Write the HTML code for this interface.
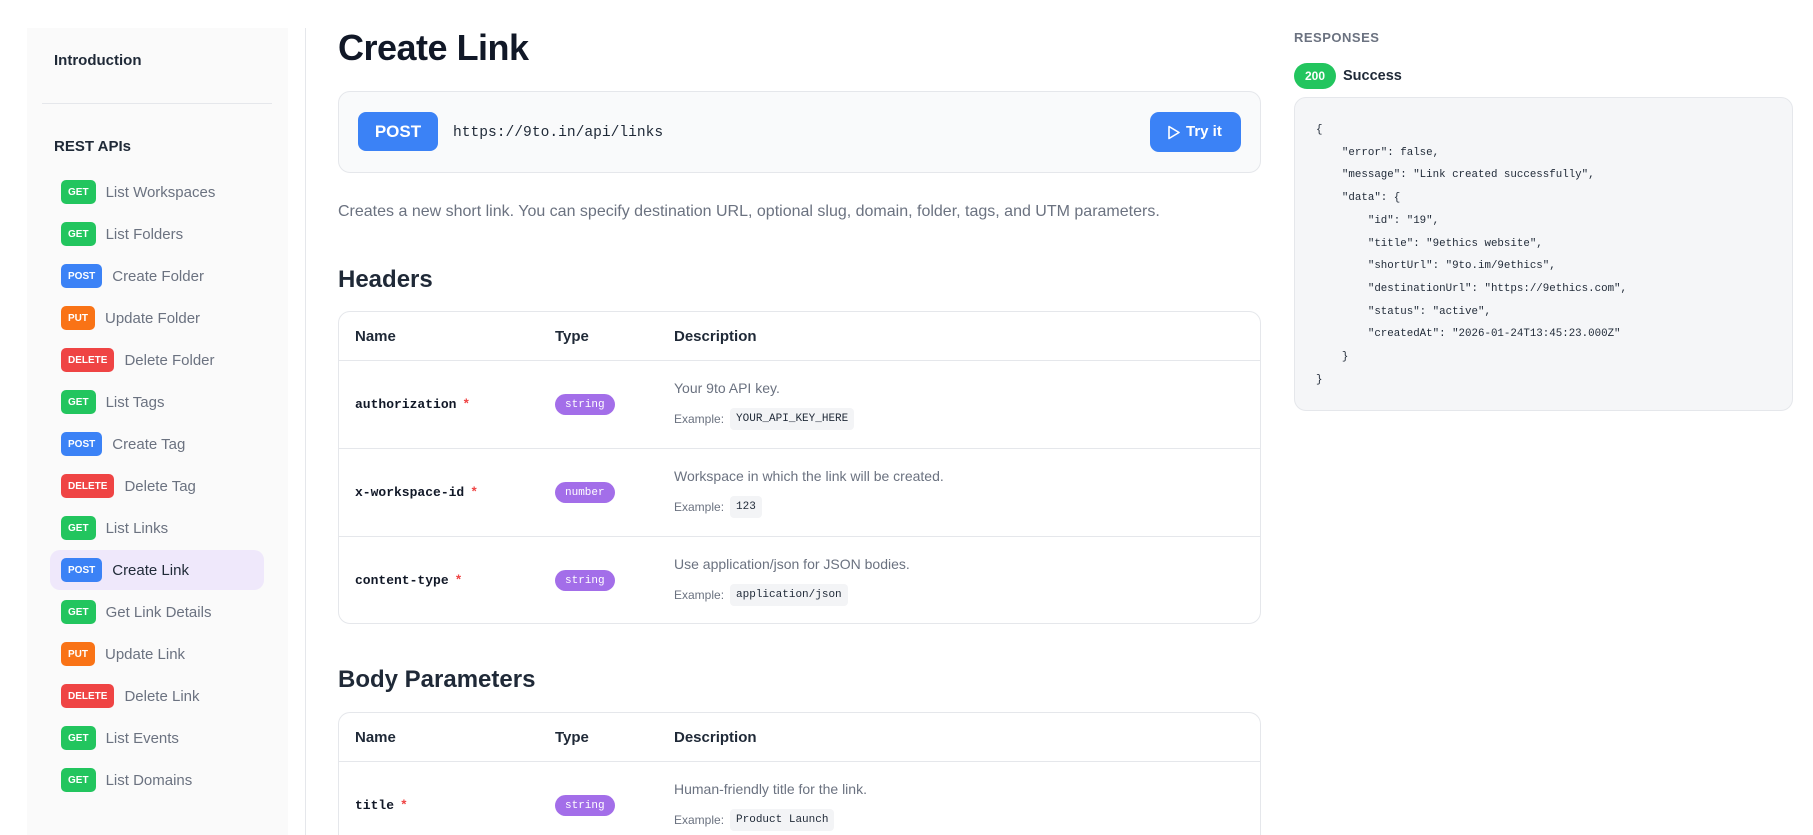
<!DOCTYPE html>
<html><head><meta charset="utf-8"><style>
*{box-sizing:border-box;margin:0;padding:0}
html{width:1813px;height:835px;overflow:hidden}
body{width:1813px;height:835px;overflow:hidden;background:#fff;font-family:"Liberation Sans",sans-serif;color:#111827;position:relative}
.abs{position:absolute}
.side{left:27px;top:28px;width:261px;height:807px;background:#fafafa}
.vline{left:305px;top:28px;width:1px;height:807px;background:#e5e7eb}
.sh{font-size:15px;font-weight:bold;color:#1f2937}
.item{position:absolute;left:50px;width:214px;height:40px;display:flex;align-items:center;padding-left:11px;font-size:15px;color:#6b7280;border-radius:10px}
.item.act{background:#efe8fb;color:#1f2937}
.b{display:inline-flex;align-items:center;justify-content:center;height:24px;padding:0 7px;border-radius:5px;color:#fff;font-size:10px;font-weight:bold;margin-right:10px}
.g{background:#22c55e}.p{background:#3b82f6}.u{background:#f97316}.d{background:#ef4444}
.mono{font-family:"Liberation Mono",monospace}
.tbl{border:1px solid #e5e7eb;border-radius:12px;left:338px;width:923px;overflow:hidden}
.hrow{height:49px;border-bottom:1px solid #e5e7eb;position:relative;font-size:15px;font-weight:bold;color:#1f2937}
.row{height:88px;border-bottom:1px solid #e5e7eb;position:relative}
.row:last-child{border-bottom:none}
.c1{position:absolute;left:16px}.c2{position:absolute;left:216px}.c3{position:absolute;left:335px}
.hrow span{top:16px}
.nm{top:36px;font-family:"Liberation Mono",monospace;font-size:13px;font-weight:bold;color:#111827}
.nm i{color:#ef4444;font-style:normal;margin-left:6px}
.pill{top:33px;height:21px;display:flex;align-items:center;padding:0 10px;border-radius:11px;background:#a36ee9;color:#fff;font-size:11px;font-family:"Liberation Mono",monospace}
.ds{top:19px;font-size:14px;color:#6b7280}
.ex{top:47px;font-size:12px;color:#6b7280;display:flex;align-items:center}
.ex code{font-family:"Liberation Mono",monospace;font-size:11px;color:#1f2937;background:#f3f4f6;padding:5px 6px;border-radius:4px;margin-left:6px}
pre{font-family:"Liberation Mono",monospace;font-size:10.8px;line-height:22.7px;color:#1f2937}
</style></head><body>
<div class="abs side"></div>
<div class="abs vline"></div>
<div class="abs sh" style="left:54px;top:52px">Introduction</div>
<div class="abs" style="left:42px;top:103px;width:230px;height:1px;background:#e5e7eb"></div>
<div class="abs sh" style="left:54px;top:138px">REST APIs</div>
<div class="item" style="top:172px"><span class="b g">GET</span>List Workspaces</div>
<div class="item" style="top:214px"><span class="b g">GET</span>List Folders</div>
<div class="item" style="top:256px"><span class="b p">POST</span>Create Folder</div>
<div class="item" style="top:298px"><span class="b u">PUT</span>Update Folder</div>
<div class="item" style="top:340px"><span class="b d">DELETE</span>Delete Folder</div>
<div class="item" style="top:382px"><span class="b g">GET</span>List Tags</div>
<div class="item" style="top:424px"><span class="b p">POST</span>Create Tag</div>
<div class="item" style="top:466px"><span class="b d">DELETE</span>Delete Tag</div>
<div class="item" style="top:508px"><span class="b g">GET</span>List Links</div>
<div class="item act" style="top:550px"><span class="b p">POST</span>Create Link</div>
<div class="item" style="top:592px"><span class="b g">GET</span>Get Link Details</div>
<div class="item" style="top:634px"><span class="b u">PUT</span>Update Link</div>
<div class="item" style="top:676px"><span class="b d">DELETE</span>Delete Link</div>
<div class="item" style="top:718px"><span class="b g">GET</span>List Events</div>
<div class="item" style="top:760px"><span class="b g">GET</span>List Domains</div>

<div class="abs" style="left:338px;top:27px;font-size:36px;font-weight:bold;color:#111827;letter-spacing:-0.5px">Create Link</div>
<div class="abs" style="left:338px;top:91px;width:923px;height:82px;background:#f9fafb;border:1px solid #e5e7eb;border-radius:12px">
 <div class="abs" style="left:19px;top:20px;width:80px;height:39px;border-radius:8px;background:#3b82f6;color:#fff;font-weight:bold;font-size:17px;text-align:center;line-height:39px">POST</div>
 <div class="abs mono" style="left:114px;top:33px;font-size:14.6px;color:#1f2937">https://9to.in/api/links</div>
 <div class="abs" style="left:811px;top:20px;width:91px;height:40px;border-radius:9px;background:#3b82f6;color:#fff;font-weight:bold;font-size:15px;line-height:40px;padding-left:36px">Try it
  <svg class="abs" style="left:17px;top:13px" width="14" height="15" viewBox="0 0 14 15"><path d="M2 1.5L12 7.5L2 13.5Z" fill="none" stroke="#fff" stroke-width="1.6" stroke-linejoin="round"/></svg></div>
</div>
<div class="abs" style="left:338px;top:203px;font-size:16px;color:#6b7280">Creates a new short link. You can specify destination URL, optional slug, domain, folder, tags, and UTM parameters.</div>
<div class="abs" style="left:338px;top:266px;font-size:24px;font-weight:bold;color:#1f2937">Headers</div>
<div class="abs tbl" style="top:311px;height:313px">
 <div class="hrow"><span class="c1">Name</span><span class="c2">Type</span><span class="c3">Description</span></div>
 <div class="row"><span class="c1 nm">authorization<i>*</i></span><span class="c2 pill">string</span><span class="c3 ds">Your 9to API key.</span><span class="c3 ex">Example:<code>YOUR_API_KEY_HERE</code></span></div>
 <div class="row"><span class="c1 nm">x-workspace-id<i>*</i></span><span class="c2 pill">number</span><span class="c3 ds">Workspace in which the link will be created.</span><span class="c3 ex">Example:<code>123</code></span></div>
 <div class="row"><span class="c1 nm">content-type<i>*</i></span><span class="c2 pill">string</span><span class="c3 ds">Use application/json for JSON bodies.</span><span class="c3 ex">Example:<code>application/json</code></span></div>
</div>
<div class="abs" style="left:338px;top:666px;font-size:24px;font-weight:bold;color:#1f2937">Body Parameters</div>
<div class="abs tbl" style="top:712px;height:123px;border-bottom:none;border-radius:12px 12px 0 0">
 <div class="hrow"><span class="c1">Name</span><span class="c2">Type</span><span class="c3">Description</span></div>
 <div class="row"><span class="c1 nm">title<i>*</i></span><span class="c2 pill">string</span><span class="c3 ds">Human-friendly title for the link.</span><span class="c3 ex">Example:<code>Product Launch</code></span></div>
</div>

<div class="abs" style="left:1294px;top:30px;font-size:13px;font-weight:bold;color:#6b7280;letter-spacing:0.5px">RESPONSES</div>
<div class="abs" style="left:1294px;top:63px;width:42px;height:26px;border-radius:13px;background:#22c55e;color:#fff;font-size:12px;font-weight:bold;text-align:center;line-height:26px">200</div>
<div class="abs" style="left:1343px;top:68px;font-size:14.5px;font-weight:bold;color:#1f2937">Success</div>
<div class="abs" style="left:1294px;top:97px;width:499px;height:314px;background:#f5f6f8;border:1px solid #e5e7eb;border-radius:12px;padding:21px 0 0 21px">
<pre>{
    "error": false,
    "message": "Link created successfully",
    "data": {
        "id": "19",
        "title": "9ethics website",
        "shortUrl": "9to.im/9ethics",
        "destinationUrl": "https://9ethics.com",
        "status": "active",
        "createdAt": "2026-01-24T13:45:23.000Z"
    }
}</pre></div>
</body></html>
